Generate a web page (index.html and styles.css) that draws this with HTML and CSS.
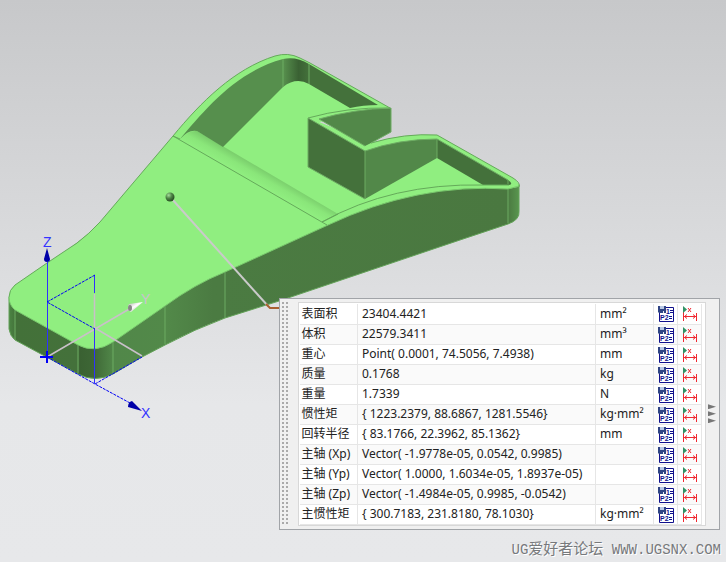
FILE: index.html
```
<!DOCTYPE html>
<html lang="zh-CN">
<head>
<meta charset="utf-8">
<title>UG爱好者论坛</title>
<link rel="stylesheet" href="styles.css">
</head>
<body>
<main class="viewport">
<svg class="model" viewBox="0 0 726 562" preserveAspectRatio="xMinYMin slice" aria-hidden="true">
  <defs>
    <linearGradient id="side" gradientUnits="userSpaceOnUse" x1="8" y1="0" x2="520" y2="0">
      <stop offset="0" stop-color="#4d8746"/><stop offset=".016" stop-color="#437139"/>
      <stop offset=".137" stop-color="#44713b"/><stop offset=".14" stop-color="#3a6132"/>
      <stop offset=".165" stop-color="#3d6635"/><stop offset=".205" stop-color="#518749"/>
      <stop offset=".31" stop-color="#528949"/><stop offset=".4" stop-color="#4b7b42"/>
      <stop offset=".975" stop-color="#4a7840"/><stop offset="1" stop-color="#5a9850"/>
    </linearGradient>
    <linearGradient id="corner">
      <stop offset="0" stop-color="#58914e"/><stop offset=".6" stop-color="#3a6133"/><stop offset="1" stop-color="#44713b"/>
    </linearGradient>
    <linearGradient id="fillet" gradientUnits="userSpaceOnUse" x1="252" y1="181" x2="260" y2="167">
      <stop offset="0" stop-color="#90ee80"/><stop offset=".5" stop-color="#8ae67a"/><stop offset="1" stop-color="#79cc6b"/>
    </linearGradient>
    <radialGradient id="ball" cx=".35" cy=".3" r=".7">
      <stop offset="0" stop-color="#a5dd9b"/><stop offset=".5" stop-color="#4f8647"/><stop offset="1" stop-color="#284e23"/>
    </radialGradient>
    <linearGradient id="cone" x1="0" y1="0" x2="1" y2="1">
      <stop offset="0" stop-color="#aaa"/><stop offset=".45" stop-color="#fff"/><stop offset="1" stop-color="#888"/>
    </linearGradient>
  </defs>

  <path fill="url(#side)" stroke="#63a258" d="M9 297V329Q10 336 15 340L78 374Q95 383 113 374L142 357 165 345Q195 329 225 318L279 301 460 240 508 224Q520 220 519 211V185L300 130 100 225Z"/>
  <path fill="#90ee80" d="M9 297Q9 290 15 285L47 263 77 243Q89 234 100 222L173 136C201 102 234 69 275 56Q288 52 300 58L310 63 390 108 308 118 371 143Q405 133 437 135L513 178Q521 184 518 187L508 189Q417 183 328 225L225 272Q195 284 165 306L113 342Q95 354 78 345L15 310Q9 305 9 297Z"/>
  <path class="edge" d="M9 297Q9 290 15 285L47 263 77 243Q89 234 100 222L173 136C201 102 234 69 275 56Q288 52 300 58L310 63 390 108"/>
  <path class="glow" d="M9 297Q9 305 15 310L78 345Q95 354 113 342L165 306Q195 284 225 272L328 225Q417 183 508 189L519 186"/>
  <path class="seam" d="M15 310V340M78 345V373M113 342V374M165 306V344M225 272V318M508 189V223"/>

  <path fill="url(#fillet)" d="M180 139Q189 130 197 131L338 214 323 222Z"/>
  <path fill="#568f4d" d="M180 139C204 111 235 72 283 59V87L223 147 197 131Q189 129 180 139Z"/>
  <path fill="url(#corner)" d="M283 59Q296 56 309 64V84Q296 77 283 87Z"/>
  <path fill="#44713b" d="M309 64L378 105Q363 105 350 108L309 84Z"/>
  <path class="seam" d="M283 59V87M309 64V84"/>
  <path class="edge" d="M173 136L327 225M180 139L173 136M322 222L338 214"/>

  <path fill="#90ee80" d="M308 118Q347 107 390 108L391 112 319 122 371 143Q405 133 437 135V140Q400 139 365 152Z"/>
  <path fill="#528849" d="M319 119Q354 109 391 108V132L371 143 365 146Z"/>
  <path fill="#44713b" d="M308 118L365 151V199L308 167Z"/>
  <path fill="#528849" d="M365 151Q399 139 437 139V158L365 199Z"/>
  <path fill="#44713b" d="M437 139L508 180Q514 184 509 185L483 185 437 158Z"/>
  <path class="edge" d="M308 118Q347 107 390 108M371 143Q405 133 437 135L513 178Q521 183 519 187M322 222Q392 183 483 185L509 185"/>
  <path class="seam" d="M365 151V199M308 118V167L365 199M308 118L365 151Q399 139 437 139V158M319 119Q354 109 391 108V132L371 143M319 119L365 146M437 139L508 180V184"/>

  <path class="leader" d="M171 198L268 306"/>
  <path fill="none" stroke="#a86032" stroke-width="2" d="M266 304L270 308H280"/>
  <circle cx="170" cy="197" r="4.5" fill="url(#ball)"/>

  <path class="plane" d="M47 357L131 308M94.500 328V294M95 328L142 356"/>
  <path class="axis" d="M47.500 262V357M94.500 329V383M94.500 293V275"/>
  <path class="dots" d="M95 275L47 302 95 329M47 357L95 384 130 403M95 384L142 357"/>
  <path fill="none" stroke="#0000f5" stroke-width="2" d="M40 357H53M47 351V363"/>
  <path fill="#0000a8" d="M47 248L50 259Q50 262 47 262Q44 262 44 259ZM142 411L128 407Q128 402 132 401Z"/>
  <path fill="url(#cone)" d="M143 302L129 304Q126 309 131 312Z"/>
  <ellipse cx="130" cy="308" rx="2" ry="3" fill="#858585"/>
  <text class="axis-label" x="43" y="247">Z</text>
  <text class="axis-label" x="141" y="418">X</text>
  <text class="axis-label pale" x="141" y="304">Y</text>
</svg>

<section class="panel" aria-label="测量结果">
  <div class="grip"></div>
  <div class="results"><table><tbody id="rows"></tbody></table></div>
  <div class="expand"><i></i><i></i><i></i></div>
</section>
<footer class="watermark"><span class="latin">UG</span>爱好者论坛<span class="latin"> WWW.UGSNX.COM</span></footer>
</main>
<script src="rows.js"></script>
</body>
</html>
```
FILE: styles.css
```
* { box-sizing: border-box; }
body { margin: 0; font-family: "Noto Sans", "Noto Sans CJK SC", sans-serif; }
.viewport {
  position: relative;
  min-height: 100vh;
  background: linear-gradient(#c7c8ca, #e6e7e9 72%, #e7e8ea);
  overflow: hidden;
}
.model { position: absolute; inset: 0; width: 100%; height: 100%; }
.edge { fill: none; stroke: #65aa5a; }
.glow { fill: none; stroke: #79c86d; }
.seam { fill: none; stroke: #6dac63; }
.leader { stroke: #cacaca; stroke-width: 2; }
.plane { fill: none; stroke: #c9c0c9; stroke-width: 1.5; }
.axis { stroke: #3030ff; stroke-width: 1; }
.dots { fill: none; stroke: #0000f5; stroke-width: 1; stroke-dasharray: 3 1; }
.axis-label { font: 14px "Liberation Sans", sans-serif; fill: #3434ff; }
.axis-label.pale { fill: #cbc3cf; }
.glyph { font: bold 7px "Liberation Sans", sans-serif; fill: #10108c; }

.panel {
  position: absolute;
  top: 298px;
  right: 6px;
  display: flex;
  padding: 3px 0;
  background: #f0f0f0;
  border: 1px solid #a1a4a8;
}
.grip {
  width: 8px;
  margin: 0 8px 0 2px;
  background: conic-gradient(from 0deg at 2px 2px, transparent 75%, #aaa 0) 0 0 / 4px 4px;
}
.results {
  padding: 1px 3px 0 1px;
  background: #fff;
  border: 1px solid #d8d8d8;
}
table { border-collapse: collapse; font-size: 12px; line-height: 18px; color: #222; }
tr { height: 20px; }
tr:nth-child(even) { background: #fafafa; }
th, td {
  padding: 0 4px;
  border-right: 1px solid #e6e6e6;
  border-bottom: 1px solid #e6e6e6;
  text-align: left;
  font-weight: 400;
  white-space: nowrap;
}
th { width: 58px; padding: 0 2px; }
.value { width: 238px; }
.unit { width: 58px; }
.tool { width: 24px; padding: 0 2px 0 4px; }
button {
  display: block;
  width: 17px;
  height: 17px;
  padding: 0;
  border: 0;
  background: none;
}
button svg { display: block; width: 17px; height: 17px; }
.expand { display: flex; flex-direction: column; justify-content: center; gap: 2px; width: 13px; padding-left: 2px; }
.expand i { height: 5px; width: 8px; background: #777; clip-path: polygon(0 0, 100% 50%, 0 100%); }
.watermark {
  position: absolute;
  right: 5px;
  bottom: 0;
  font-size: 15px;
  line-height: 24px;
  color: #77797c;
  text-shadow: 1px 1px #fff;
  white-space: nowrap;
}
.latin { font-family: "Liberation Mono", monospace; font-size: 14px; }
```
FILE: rows.js
```
const rows = [
  ["表面积", "23404.4421", "mm²"],
  ["体积", "22579.3411", "mm³"],
  ["重心", "Point( 0.0001, 74.5056, 7.4938)", "mm"],
  ["质量", "0.1768", "kg"],
  ["重量", "1.7339", "N"],
  ["惯性矩", "{ 1223.2379, 88.6867, 1281.5546}", "kg·mm²"],
  ["回转半径", "{ 83.1766, 22.3962, 85.1362}", "mm"],
  ["主轴 (Xp)", "Vector( -1.9778e-05, 0.0542, 0.9985)", ""],
  ["主轴 (Yp)", "Vector( 1.0000, 1.6034e-05, 1.8937e-05)", ""],
  ["主轴 (Zp)", "Vector( -1.4984e-05, 0.9985, -0.0542)", ""],
  ["主惯性矩", "{ 300.7183, 231.8180, 78.1030}", "kg·mm²"]
];
const save = `<path fill="#fff" stroke="#10108c" d="M1.500 2.500H15.500V16.500H1.500Z"/>
  <path fill="#2f4484" d="M0 1H8V8H1L0 7Z"/>
  <path fill="#b9c8e4" d="M2 1H6V4H2Z"/><path fill="#e8ecf5" d="M5 6H6V8H5Z"/>
  <path stroke="#10108c" d="M12 5.500H15M12 7.500H15M11 11.500H14M11 13.500H14"/>
  <text class="glyph" x="8" y="9">1</text><text class="glyph" x="2" y="15">P2</text>`;
const measure = `<path fill="none" stroke="#f02830" d="M1.500 3V16M14.500 8V16M2 11.500H14M5 9.500L2.500 11.500 5 13.500M11 9.500L13.500 11.500 11 13.500M6 3L9 7M9 3L6 7"/>
  <path fill="#319366" d="M1 1L5 4.500 1 8Z"/>`;
const tool = (icon, label) =>
  `<td class="tool"><button type="button" aria-label="${label}"><svg viewBox="0 0 17 17">${icon}</svg></button></td>`;
document.getElementById("rows").innerHTML = rows.map(([name, value, unit]) =>
  `<tr><th scope="row">${name}</th><td class="value">${value}</td><td class="unit">${unit}</td>` +
  tool(save, "保存" + name) + tool(measure, "标注" + name) + "</tr>").join("");
```
